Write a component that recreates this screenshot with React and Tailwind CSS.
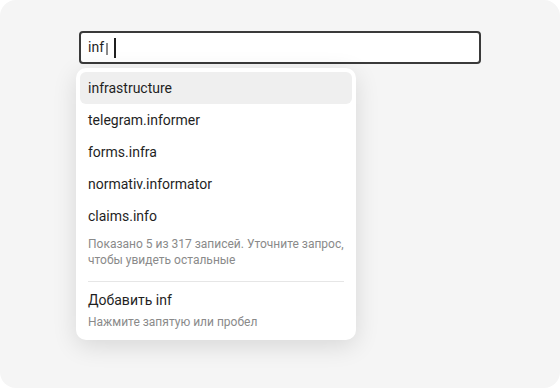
import React from "react";

const items = [
  "infrastructure",
  "telegram.informer",
  "forms.infra",
  "normativ.informator",
  "claims.info",
];

export default function App() {
  return (
    <div className="w-[560px] h-[388px] bg-white" style={{ fontFamily: "Roboto, 'Noto Sans', sans-serif" }}>
      <div className="w-full h-full rounded-2xl bg-[#f5f5f5] pt-[31px] pl-[76px]">
        <div className="ml-[3px] w-[402px] h-[33px] border-2 border-[#3a3a3a] rounded-[4px] bg-white flex items-center pl-[7px] text-[14px] text-[#1f1f1f]">
          <span>inf</span>
          <span className="ml-[2px] w-[2px] h-[12px] mt-[2px] bg-[#8a8a8a]" />
          <span className="ml-[6px] w-[1.5px] h-[20px] bg-[#1f1f1f]" />
        </div>
        <div className="mt-[4px] w-[280px] bg-white rounded-[10px] p-1 shadow-[0_6px_24px_rgba(0,0,0,0.12)]">
          {items.map((it, i) => (
            <div
              key={it}
              className={
                "h-[32px] flex items-center px-2 rounded-[6px] text-[14px] text-[#1f1f1f] " +
                (i === 0 ? "bg-[#efefef]" : "")
              }
            >
              {it}
            </div>
          ))}
          <div className="px-2 pt-1 pb-[13px] text-[12px] leading-[16px] text-[#8a8a8a]">
            Показано 5 из 317 записей. Уточните запрос, чтобы увидеть остальные
          </div>
          <div className="mx-2 h-px bg-[#e6e6e6]" />
          <div className="px-2 pt-2 pb-[6px]">
            <div className="text-[14px] leading-[20px] text-[#1f1f1f]">Добавить inf</div>
            <div className="mt-1 text-[12px] leading-[16px] text-[#8a8a8a]">Нажмите запятую или пробел</div>
          </div>
        </div>
      </div>
    </div>
  );
}
